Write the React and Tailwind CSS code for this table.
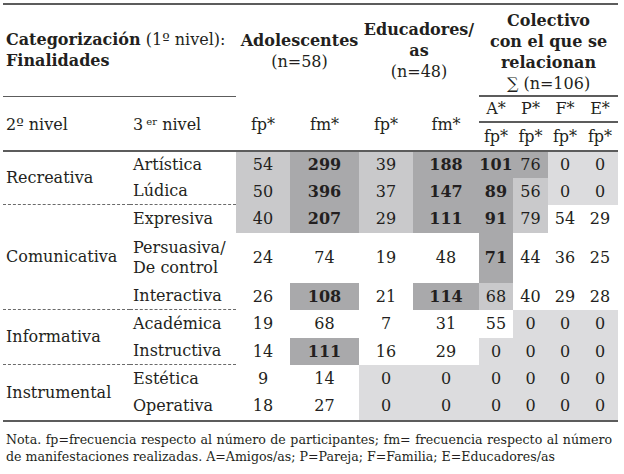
import React from 'react';

const shade = {
    d: 'bg-[#a9a9ab]',
    m: 'bg-[#c9c9cb]',
    l: 'bg-[#dcdcde]',
    w: '',
};

// each value: [text, shade, bold]
const groups = [
    {
        name: 'Recreativa',
        rows: [
            ['Artística', [['54', 'm'], ['299', 'd', 1], ['39', 'm'], ['188', 'd', 1], ['101', 'd', 1], ['76', 'd'], ['0', 'l'], ['0', 'l']]],
            ['Lúdica', [['50', 'm'], ['396', 'd', 1], ['37', 'm'], ['147', 'd', 1], ['89', 'd', 1], ['56', 'm'], ['0', 'l'], ['0', 'l']]],
        ],
    },
    {
        name: 'Comunicativa',
        rows: [
            ['Expresiva', [['40', 'm'], ['207', 'd', 1], ['29', 'm'], ['111', 'd', 1], ['91', 'd', 1], ['79', 'm'], ['54', 'w'], ['29', 'w']]],
            ['Persuasiva/ De control', [['24', 'w'], ['74', 'w'], ['19', 'w'], ['48', 'w'], ['71', 'd', 1], ['44', 'w'], ['36', 'w'], ['25', 'w']]],
            ['Interactiva', [['26', 'w'], ['108', 'd', 1], ['21', 'w'], ['114', 'd', 1], ['68', 'm'], ['40', 'w'], ['29', 'w'], ['28', 'w']]],
        ],
    },
    {
        name: 'Informativa',
        rows: [
            ['Académica', [['19', 'w'], ['68', 'w'], ['7', 'w'], ['31', 'w'], ['55', 'w'], ['0', 'l'], ['0', 'l'], ['0', 'l']]],
            ['Instructiva', [['14', 'w'], ['111', 'd', 1], ['16', 'w'], ['29', 'w'], ['0', 'l'], ['0', 'l'], ['0', 'l'], ['0', 'l']]],
        ],
    },
    {
        name: 'Instrumental',
        rows: [
            ['Estética', [['9', 'w'], ['14', 'w'], ['0', 'l'], ['0', 'l'], ['0', 'l'], ['0', 'l'], ['0', 'l'], ['0', 'l']]],
            ['Operativa', [['18', 'w'], ['27', 'w'], ['0', 'l'], ['0', 'l'], ['0', 'l'], ['0', 'l'], ['0', 'l'], ['0', 'l']]],
        ],
    },
];

const Rule = () => <div className="col-span-10 bg-[#5c5c5c]" />;

const App = () => {
    return (
        <div className="w-[624px] h-[474px] bg-white text-[#231f20] font-['DejaVu_Serif',serif] text-[16px] leading-[20px] overflow-hidden">
            <div className="ml-[3px] mt-[3px] grid grid-cols-[127px_106px_54px_69px_54px_66px_34px_35px_34px_36px] grid-rows-[2px_92px_26px_27px_2px_26px_27px_28px_50px_27px_28px_27px_27px_28px_2px]">
                <Rule />

                {/* header first row */}
                <div className="col-span-2 flex flex-col justify-center pl-[3px] border-b-[1.5px] border-[#5c5c5c] leading-[21px] pb-[1px]">
                    <div><span className="font-bold">Categorización</span> (1º nivel):</div>
                    <div className="font-bold">Finalidades</div>
                </div>
                <div className="col-span-2 flex flex-col justify-center items-center text-center leading-[21px] pl-[4px]">
                    <div className="font-bold">Adolescentes</div>
                    <div>(n=58)</div>
                </div>
                <div className="col-span-2 flex flex-col justify-center items-center text-center leading-[21px] pb-[2px]">
                    <div className="font-bold">Educadores/</div>
                    <div className="font-bold">as</div>
                    <div>(n=48)</div>
                </div>
                <div className="col-span-4 flex flex-col justify-end items-center text-center leading-[21px] border-b-2 border-[#5c5c5c] pb-[1px]">
                    <div className="font-bold">Colectivo</div>
                    <div className="font-bold">con el que se</div>
                    <div className="font-bold">relacionan</div>
                    <div>∑ (n=106)</div>
                </div>

                {/* header second row */}
                <div className="row-span-2 flex items-center pl-[3px] pt-[3px]">2º nivel</div>
                <div className="row-span-2 flex items-center pl-[3px] pt-[3px]">
                    <span>3<sup className="text-[10px]"> er</sup> nivel</span>
                </div>
                <div className="row-span-2 flex items-center justify-center pt-[3px]">fp*</div>
                <div className="row-span-2 flex items-center justify-center pt-[3px]">fm*</div>
                <div className="row-span-2 flex items-center justify-center pt-[3px]">fp*</div>
                <div className="row-span-2 flex items-center justify-center pt-[3px]">fm*</div>
                {['A*', 'P*', 'F*', 'E*'].map((h) => (
                    <div key={h} className="flex items-center justify-center border-b-2 border-[#5c5c5c]">{h}</div>
                ))}
                {[0, 1, 2, 3].map((i) => (
                    <div key={i} className="flex items-center justify-center">fp*</div>
                ))}

                <Rule />

                {/* body */}
                {groups.map((g, gi) => {
                    const last = gi === groups.length - 1;
                    const dash = last ? '' : 'border-b border-dashed border-[#6a6a6a]';
                    const span = g.rows.length === 3 ? 'row-span-3' : 'row-span-2';
                    return (
                        <React.Fragment key={g.name}>
                            <div className={`${span} ${dash} flex items-center pl-[3px]`}>{g.name}</div>
                            {g.rows.map(([label, vals], ri) => {
                                const lastRow = ri === g.rows.length - 1;
                                return (
                                    <React.Fragment key={label}>
                                        <div className={`${lastRow ? dash : ''} flex items-center pl-[3px]`}>
                                            {label === 'Persuasiva/ De control' ? (
                                                <div>
                                                    <div>Persuasiva/</div>
                                                    <div>De control</div>
                                                </div>
                                            ) : (
                                                label
                                            )}
                                        </div>
                                        {vals.map(([v, s, b], vi) => (
                                            <div
                                                key={vi}
                                                className={`${shade[s]} ${b ? 'font-bold' : ''} flex items-center justify-center`}
                                            >
                                                {v}
                                            </div>
                                        ))}
                                    </React.Fragment>
                                );
                            })}
                        </React.Fragment>
                    );
                })}

                <Rule />
            </div>

            <div className="mt-[9px] ml-[6px] w-[606px] text-[12.6px] leading-[17px]">
                <div className="text-justify [text-align-last:justify] whitespace-nowrap">
                    Nota. fp=frecuencia respecto al número de participantes; fm= frecuencia respecto al número
                </div>
                <div>de manifestaciones realizadas. A=Amigos/as; P=Pareja; F=Familia; E=Educadores/as</div>
            </div>
        </div>
    );
};

export default App;
